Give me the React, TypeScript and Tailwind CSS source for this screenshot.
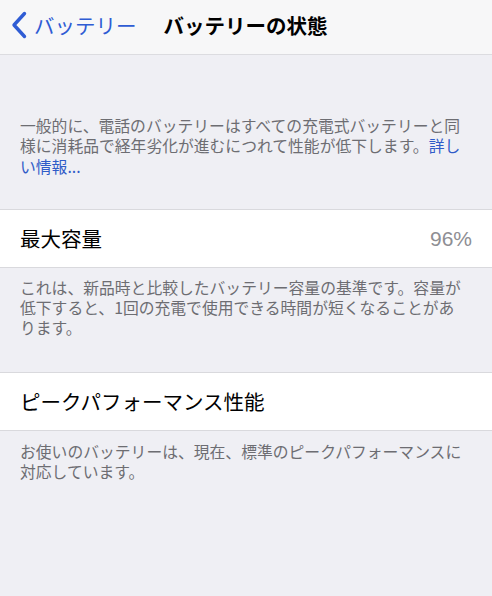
import React from "react";

const jp = { fontFamily: '"Noto Sans CJK JP", "Noto Sans", sans-serif' };

function Footer({ children, className }: { children: React.ReactNode; className: string }) {
  return (
    <div className={`pl-5 pr-5 text-[15.8px] leading-[20.3px] text-[#6d6d72] ${className}`}>
      {children}
    </div>
  );
}

function Row({ label, value }: { label: string; value?: string }) {
  return (
    <div className="flex items-center justify-between h-[59px] bg-white border-y border-[#d9d9dd] pl-5 pr-5">
      <span className="text-[20.5px] text-black">{label}</span>
      {value && (
        <span
          className="text-[21px] text-[#8e8e93]"
          style={{ fontFamily: '"Liberation Sans", Arial, sans-serif' }}
        >
          {value}
        </span>
      )}
    </div>
  );
}

export default function App() {
  return (
    <div className="w-[492px] h-[596px] bg-[#efeff4] overflow-hidden" style={jp}>
      {/* Nav bar */}
      <div className="flex items-center h-[55px] bg-[#f7f7f8] border-b border-[#dcdce0] pb-[4px]">
        <svg width="16" height="28" viewBox="0 0 16 28" className="ml-[11px]">
          <path
            d="M13.5 2.5 L3 14 L13.5 25.5"
            fill="none"
            stroke="#2f5cd4"
            strokeWidth="3.4"
            strokeLinecap="round"
            strokeLinejoin="round"
          />
        </svg>
        <span className="ml-[7px] text-[20.5px] text-[#2f5cd4]">バッテリー</span>
        <span className="ml-[27px] text-[20.5px] font-bold text-black">バッテリーの状態</span>
      </div>

      <Footer className="pt-[61px] pb-[32px]">
        一般的に、電話のバッテリーはすべての充電式バッテリーと同様に消耗品で経年劣化が進むにつれて性能が低下します。
        <span className="text-[#2f5bc8]">詳しい情報...</span>
      </Footer>

      <Row label="最大容量" value="96%" />

      <Footer className="pt-[10px] pb-[33px]">
        これは、新品時と比較したバッテリー容量の基準です。容量が低下すると、1回の充電で使用できる時間が短くなることがあ
        <br />
        ります。
      </Footer>

      <Row label="ピークパフォーマンス性能" />

      <Footer className="pt-[11px]">
        お使いのバッテリーは、現在、標準のピークパフォーマンスに対応しています。
      </Footer>
    </div>
  );
}
